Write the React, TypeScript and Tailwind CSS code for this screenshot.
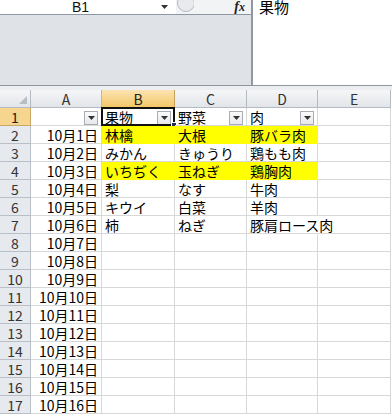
import React from "react";

const FONT = "font-['Noto_Sans_CJK_JP','Noto_Sans',sans-serif]";

type Row = { a: string; b: string; c: string; d: string; yellow?: boolean };

const rows: Row[] = [
  { a: "", b: "果物", c: "野菜", d: "肉" },
  { a: "10月1日", b: "林檎", c: "大根", d: "豚バラ肉", yellow: true },
  { a: "10月2日", b: "みかん", c: "きゅうり", d: "鶏もも肉" },
  { a: "10月3日", b: "いちぢく", c: "玉ねぎ", d: "鶏胸肉", yellow: true },
  { a: "10月4日", b: "梨", c: "なす", d: "牛肉" },
  { a: "10月5日", b: "キウイ", c: "白菜", d: "羊肉" },
  { a: "10月6日", b: "柿", c: "ねぎ", d: "豚肩ロース肉" },
  ...Array.from({ length: 10 }, (_, i) => ({ a: `10月${i + 7}日`, b: "", c: "", d: "" })),
];

function FilterBtn() {
  return (
    <div className="absolute right-[3px] top-[3px] w-[14px] h-[14px] border border-[#a9adb3] bg-gradient-to-b from-[#fbfbfc] to-[#e6e8eb] flex items-center justify-center">
      <svg width="7" height="4" viewBox="0 0 7 4">
        <polygon points="0,0 7,0 3.5,4" fill="#333" />
      </svg>
    </div>
  );
}

export default function App() {
  return (
    <div className={`w-[392px] h-[414px] overflow-hidden bg-white ${FONT} text-[14px] text-black`}>
      {/* formula bar */}
      <div className="flex h-[86px] border-b border-[#8e98a3]">
        <div className="w-[251px] flex flex-col">
          <div className="h-[15px] flex items-center border-b border-[#8e98a3] bg-white">
            <div className="w-[176px] flex items-center h-full pr-[8px]">
              <span className="flex-1 text-center text-[14px] leading-[14px] font-['Liberation_Sans',sans-serif] text-[#111]">B1</span>
              <svg width="7" height="4" viewBox="0 0 7 4">
                <polygon points="0,0 7,0 3.5,4" fill="#333" />
              </svg>
            </div>
            <div className="flex-1 h-full flex items-center bg-[#f2f3f5] overflow-hidden">
              <svg className="shrink-0 self-start mt-[-6px]" width="18" height="20" viewBox="0 0 18 20">
                <circle cx="10" cy="9" r="8.5" fill="#e8eaed" stroke="#b5bac1" strokeWidth="1" />
                <path d="M6 6 a5 5 0 0 1 7 -1" stroke="#c9cdd2" strokeWidth="2" fill="none" />
              </svg>
              <span className="ml-auto mr-[6px] italic font-['Liberation_Serif',serif] font-bold text-[14px] leading-[14px] text-[#222]">
                f<span className="text-[12px]">x</span>
              </span>
            </div>
          </div>
          <div className="flex-1 bg-[#dfe3e8]" />
        </div>
        <div className="flex-1 border-l-2 border-[#9099a3] bg-white pl-[6px]">
          <div className="leading-[14px] text-[15px]">果物</div>
        </div>
      </div>
      <div className="h-[4px] bg-[#eceef1]" />

      {/* sheet */}
      <div className="grid grid-cols-[31px_71px_73px_72px_71px_73px] leading-[18px]">
        {/* header row */}
        <div className="h-[18px] flex items-end justify-end pr-[3px] pb-[3px] bg-gradient-to-b from-[#f5f6f8] to-[#e2e5e9] border-r border-b border-[#b4bac3]">
          <svg width="8" height="8" viewBox="0 0 8 8">
            <polygon points="8,0 8,8 0,8" fill="#b7bdc5" />
          </svg>
        </div>
        {["A", "B", "C", "D", "E"].map((l) => (
          <div
            key={l}
            className={
              l === "B"
                ? "h-[18px] flex items-center justify-center bg-gradient-to-b from-[#fbe3b0] to-[#f3c766] border-r border-b border-[#c2a25c] text-[14px] leading-[18px] text-[#222]"
                : "h-[18px] flex items-center justify-center bg-gradient-to-b from-[#f5f6f8] to-[#e2e5e9] border-r border-b border-[#b4bac3] text-[14px] leading-[18px] text-[#333]"
            }
          >
            {l}
          </div>
        ))}

        {rows.map((r, i) => {
          const n = i + 1;
          const first = n === 1;
          const y = r.yellow;
          const cellBase = "h-[18px] relative whitespace-nowrap leading-[19px] border-r border-b";
          const dataBorder = y ? "border-[#ffff00] bg-[#ffff00]" : "border-[#d6d8da]";
          return (
            <React.Fragment key={n}>
              <div
                className={
                  first
                    ? "h-[18px] flex items-center justify-center bg-[#f6d58f] border-r border-b border-[#c9a866] text-[14px] leading-[18px] text-[#222]"
                    : "h-[18px] flex items-center justify-center bg-[#e6e9ed] border-r border-b border-[#b9bfc7] text-[14px] leading-[18px] text-[#333]"
                }
              >
                {n}
              </div>
              <div className={`${cellBase} border-[#d6d8da] text-right pr-[3px]`}>
                {r.a}
                {first && <FilterBtn />}
              </div>
              <div className={`${cellBase} ${dataBorder} pl-[3px]`}>
                {r.b}
                {first && <FilterBtn />}
                {first && (
                  <>
                    <div className="absolute -left-[1px] -top-[1px] right-[-1px] bottom-[-1px] border-2 border-[#111] pointer-events-none" />
                    <div className="absolute right-[-3px] bottom-[-3px] w-[6px] h-[6px] bg-[#1f2a5a] border border-white" />
                  </>
                )}
              </div>
              <div className={`${cellBase} ${dataBorder} pl-[3px]`}>
                {r.c}
                {first && <FilterBtn />}
              </div>
              <div
                className={`${cellBase} ${
                  n === 7 ? "border-b-[#d6d8da] border-r-transparent overflow-visible z-10" : dataBorder
                } pl-[3px]`}
              >
                {r.d}
                {first && <FilterBtn />}
              </div>
              <div className={`${cellBase} border-[#d6d8da]`} />
            </React.Fragment>
          );
        })}
      </div>
    </div>
  );
}
